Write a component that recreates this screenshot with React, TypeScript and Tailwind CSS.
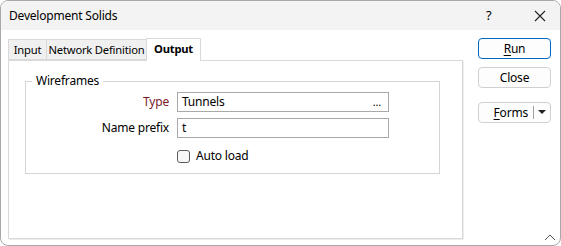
import React from 'react';

const font = { fontFamily: '"Segoe UI", "Noto Sans", "Liberation Sans", sans-serif' };

const Tab = ({ label, width, active }: { label: string; width: string; active?: boolean }) => (
  <div
    className={
      active
        ? `${width} h-[23px] -mb-px -ml-px border border-b-0 border-[#d9d9d9] bg-white font-bold text-black leading-[20px] text-center z-10`
        : `${width} h-[21px] border border-[#d9d9d9] -ml-px first:ml-0 bg-[#f0f0f0] text-black leading-[19px] text-center`
    }
  >
    {label}
  </div>
);

const Button = ({ children, primary }: { children: React.ReactNode; primary?: boolean }) => (
  <div
    className={`w-[73px] h-[21px] rounded-[4px] bg-[#fdfdfd] flex items-center justify-center text-[12px] ${
      primary ? 'border border-[#0067c0]' : 'border border-[#d0d0d0]'
    }`}
  >
    {children}
  </div>
);

export default function App() {
  return (
    <div
      className="w-[561px] h-[246px] bg-white rounded-[8px] border border-[#a8a8a8] overflow-hidden relative text-[12px] tracking-[-0.2px] text-black"
      style={font}
    >
      {/* Title bar */}
      <div className="h-[29px] bg-[#f3f3f3] flex items-center pl-[8px]">
        <span className="flex-1 pt-[1px]">Development Solids</span>
        <span className="w-[10px] mr-[38px] text-[13px]">?</span>
        <svg className="mr-[14px]" width="12" height="12" viewBox="0 0 12 12">
          <path d="M1 1 L11 11 M11 1 L1 11" stroke="#222" strokeWidth="1.1" fill="none" />
        </svg>
      </div>

      <div className="flex">
        {/* Left: tabs */}
        <div className="pl-[7px] pt-[8px]">
          <div className="flex items-end h-[22px] text-[11.2px] tracking-[-0.2px]">
            <Tab label="Input" width="w-[39px]" />
            <Tab label="Network Definition" width="w-[101px]" />
            <Tab label="Output" width="w-[55px]" active />
          </div>
          <div className="w-[455px] h-[179px] border border-[#d9d9d9] shadow-[1px_1px_0_#ececec] bg-white pt-[20px] px-[16px]">
            {/* Group box */}
            <div className="relative w-[415px] h-[93px] border border-[#d5d5d5]">
              <span className="absolute -top-[9px] left-[6px] bg-white px-[4px] leading-[16px]">Wireframes</span>
              <div className="grid grid-cols-[143px_212px] gap-x-[8px] gap-y-[6px] pt-[10px] items-center">
                <span className="text-right text-[#7a1a2a]">Type</span>
                <div className="h-[20px] border border-[#a9a9a9] flex items-center justify-between pl-[4px] pr-[7px]">
                  <span>Tunnels</span>
                  <span className="text-[11px]">...</span>
                </div>
                <span className="text-right">Name prefix</span>
                <div className="h-[20px] border border-[#a9a9a9] flex items-center pl-[4px]">
                  <span>t</span>
                </div>
                <span />
                <div className="flex items-center gap-[6px] pt-[3px]">
                  <div className="w-[13px] h-[13px] rounded-[3px] border border-[#5c5c5c] bg-[#f7f7f7]" />
                  <span>Auto load</span>
                </div>
              </div>
            </div>
          </div>
        </div>

        {/* Right: buttons */}
        <div className="pl-[15px] pt-[8px] flex flex-col gap-[8px]">
          <Button primary>
            <span>
              <span className="underline underline-offset-2">R</span>un
            </span>
          </Button>
          <Button>Close</Button>
          <div className="mt-[6px] w-[73px] h-[21px] rounded-[4px] border border-[#d0d0d0] bg-[#fdfdfd] flex items-center">
            <span className="flex-1 text-right pr-[5px]">
              <span className="underline underline-offset-2">F</span>orms
            </span>
            <div className="w-px h-[13px] bg-[#a0a0a0]" />
            <svg className="mx-[4px]" width="8" height="5" viewBox="0 0 8 5">
              <path d="M0 0 H8 L4 4 Z" fill="#222" />
            </svg>
          </div>
        </div>
      </div>

      {/* Resize chevron */}
      <svg className="absolute right-[4px] bottom-[4px]" width="12" height="7" viewBox="0 0 12 7">
        <path d="M1 6 L6 1 L11 6" stroke="#555" strokeWidth="1" fill="none" />
      </svg>
    </div>
  );
}
